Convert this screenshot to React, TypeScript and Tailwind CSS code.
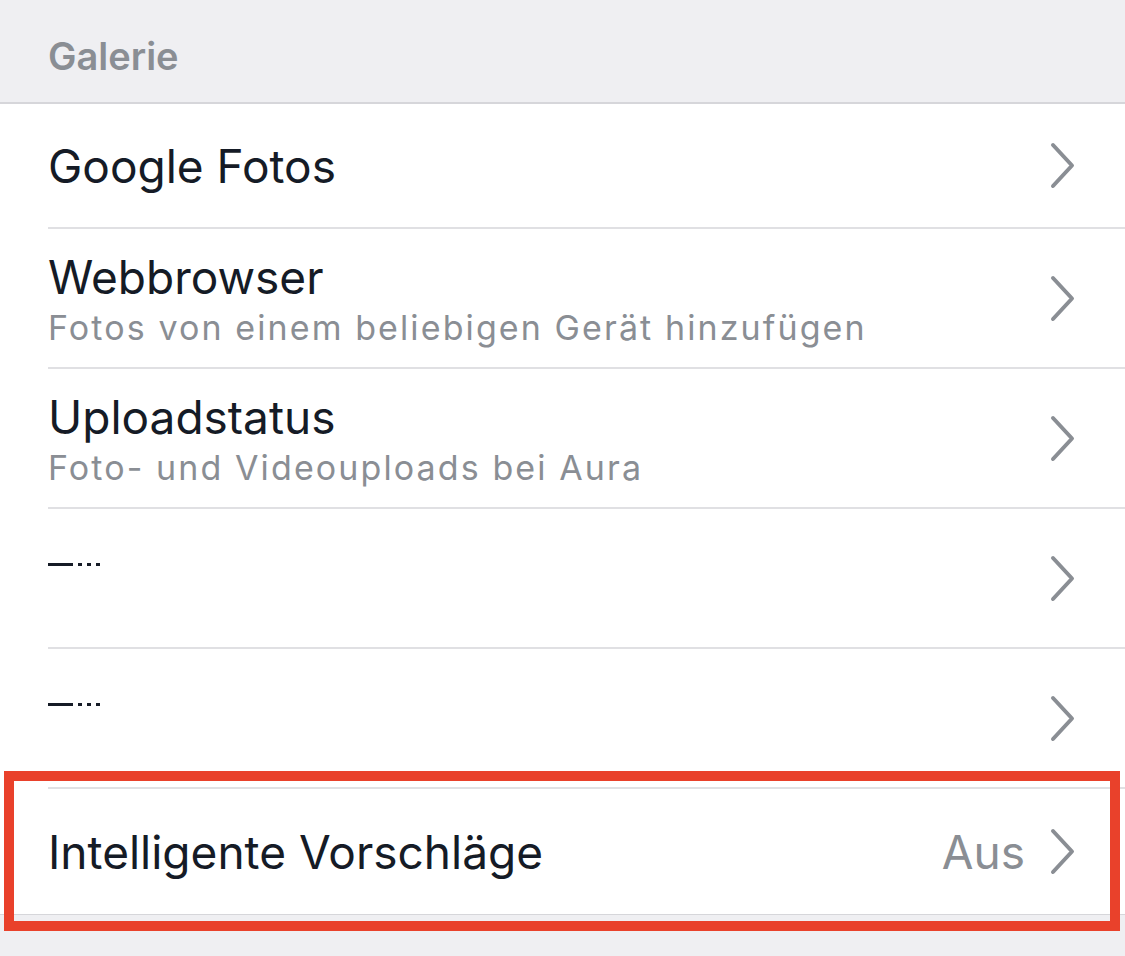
import React from "react";

type Row = {
  title?: string;
  subtitle?: string;
  value?: string;
  redacted?: boolean;
  tall?: boolean;
};

const rows: Row[] = [
  { title: "Google Fotos" },
  { title: "Webbrowser", subtitle: "Fotos von einem beliebigen Gerät hinzufügen", tall: true },
  { title: "Uploadstatus", subtitle: "Foto- und Videouploads bei Aura", tall: true },
  { redacted: true, tall: true },
  { redacted: true, tall: true },
  { title: "Intelligente Vorschläge", value: "Aus" },
];

function Chevron() {
  return (
    <svg width="27" height="49" viewBox="0 0 27 49" fill="none" className="shrink-0">
      <polyline
        points="4,4 23,24.5 4,45"
        stroke="#8a8e94"
        strokeWidth="4"
        strokeLinecap="round"
        strokeLinejoin="round"
      />
    </svg>
  );
}

function SettingsRow({ row, last }: { row: Row; last: boolean }) {
  return (
    <div className={`bg-white ${last ? "border-b border-[#d6d6da]" : ""}`}>
      <div
        className={`ml-[48px] pr-[49px] flex items-center justify-between ${
          row.tall ? "h-[140px]" : "h-[125px]"
        } ${last ? "" : "border-b-2 border-[#e0e0e3]"}`}
      >
        <div className={`flex flex-col ${row.tall ? "pt-[8px]" : ""}`}>
          {row.redacted ? (
            <>
              <div className="flex items-center gap-[5px] h-[48px] pt-[14px]">
                <span className="w-[25px] h-[3px] bg-[#151b26]" />
                <span className="w-[4px] h-[3px] bg-[#151b26]" />
                <span className="w-[4px] h-[3px] bg-[#151b26]" />
                <span className="w-[4px] h-[3px] bg-[#151b26]" />
              </div>
              <div className="h-[50px]" />
            </>
          ) : (
            <>
              <span className="text-[46px] leading-[48px] text-[#151b26]">{row.title}</span>
              {row.subtitle && (
                <span className="mt-[4px] text-[34px] leading-[46px] tracking-[2.1px] text-[#8a8e94]">
                  {row.subtitle}
                </span>
              )}
            </>
          )}
        </div>
        <div className="flex items-center gap-[24px]">
          {row.value && <span className="text-[46px] leading-[48px] text-[#8a8e94]">{row.value}</span>}
          <Chevron />
        </div>
      </div>
    </div>
  );
}

export default function App() {
  return (
    <div
      className="relative w-[1125px] h-[956px] bg-[#efeff2] overflow-hidden"
      style={{ fontFamily: "Inter, 'Noto Sans', sans-serif" }}
    >
      {/* header */}
      <div className="h-[104px] border-b-2 border-[#d6d6da] flex items-center pl-[48px] pt-[10px]">
        <span className="text-[38px] leading-[40px] font-semibold text-[#8a8e94]">Galerie</span>
      </div>

      {/* list */}
      <div>
        {rows.map((row, i) => (
          <SettingsRow key={i} row={row} last={i === rows.length - 1} />
        ))}
      </div>

      {/* annotation */}
      <div className="absolute left-[4px] top-[771px] w-[1116px] h-[160px] border-[10px] border-[#e9412b]" />
    </div>
  );
}
